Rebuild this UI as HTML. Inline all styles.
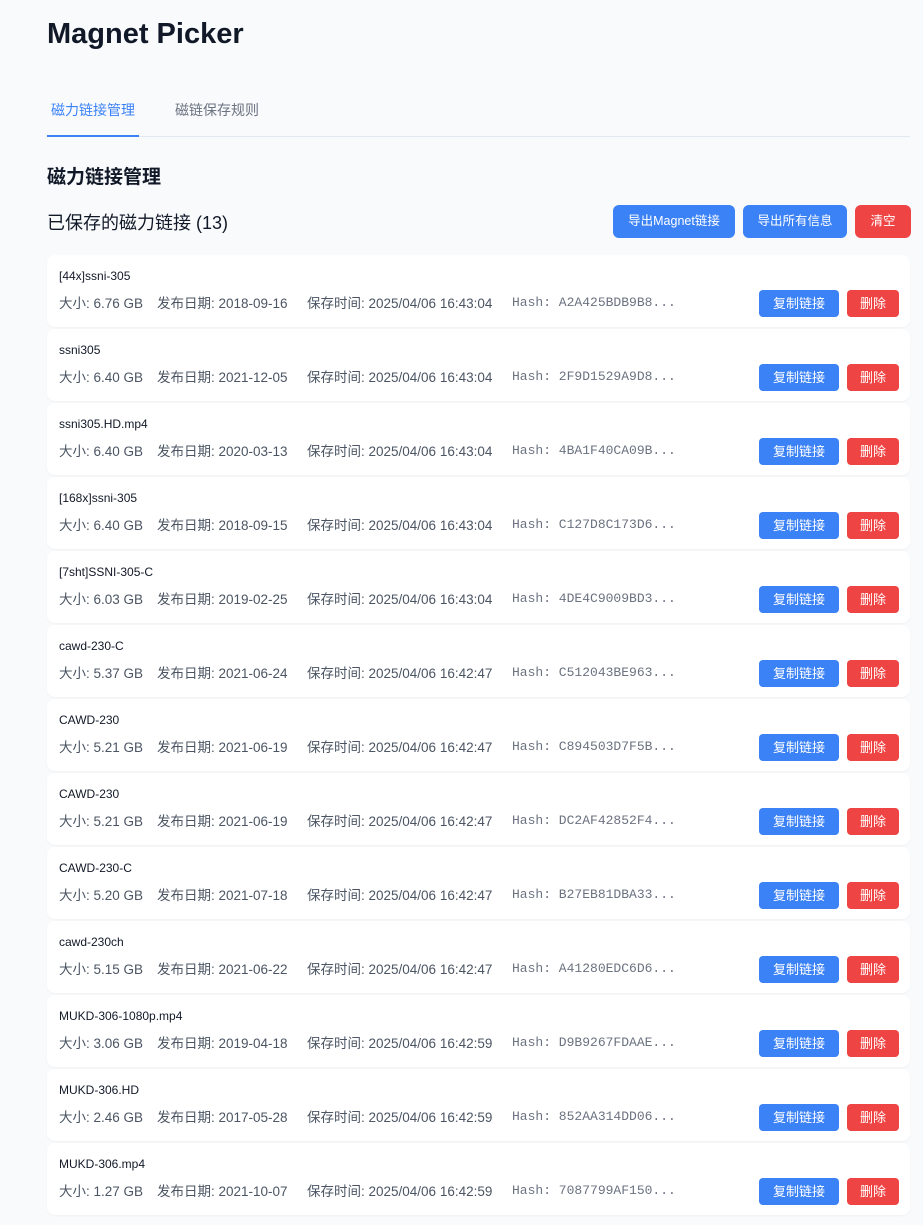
<!DOCTYPE html>
<html><head><meta charset="utf-8"><style>
*{box-sizing:border-box;margin:0;padding:0}
body{background:#f8fafc;font-family:"Liberation Sans","Noto Sans CJK SC",sans-serif;color:#111827;width:923px;height:1225px;overflow:hidden;position:relative}
h1{position:absolute;left:47px;top:18px;font-size:29px;font-weight:700;color:#111827}
.tabs{position:absolute;left:47px;top:90px;width:863px;height:47px;border-bottom:1px solid #e2e8f0}
.tab{position:absolute;top:10px;font-size:14px;color:#6b7280}
.tab.a{left:4px;color:#3b82f6}
.tab.b{left:128px}
.ul{position:absolute;left:0;bottom:-1px;width:92px;height:2px;background:#3b82f6}
h2{position:absolute;left:47px;top:162px;font-size:19px;font-weight:700}
h3{position:absolute;left:47px;top:209px;font-size:18px;font-weight:400}
.btn{position:absolute;color:#fff;font-size:12.5px;border-radius:6px;text-align:center}
.top{top:205px;height:33px;line-height:33px}
.blue{background:#3b82f6}.red{background:#ef4444}
.card{position:absolute;left:47px;width:863px;height:72px;background:#fff;border-radius:8px;box-shadow:0 1px 2px rgba(0,0,0,.04)}
.t{position:absolute;left:12px;top:14px;font-size:12px;color:#111827}
.m{position:absolute;top:37px;font-size:13.5px;color:#4b5563;white-space:nowrap}
.h{font-family:"Liberation Mono",monospace;font-size:13px;color:#6b7280}
.cb{top:35px;height:27px;line-height:27px;font-size:13px;border-radius:4px}
</style></head><body>
<h1>Magnet Picker</h1>
<div class="tabs"><div class="tab a">磁力链接管理</div><div class="tab b">磁链保存规则</div><div class="ul"></div></div>
<h2>磁力链接管理</h2>
<h3>已保存的磁力链接 (13)</h3>
<div class="btn top blue" style="left:613px;width:122px">导出Magnet链接</div>
<div class="btn top blue" style="left:743px;width:104px">导出所有信息</div>
<div class="btn top red" style="left:855px;width:56px">清空</div>
<div id="list"></div>
<script>
var d=[["[44x]ssni-305","6.76","2018-09-16","16:43:04","A2A425BDB9B8"],["ssni305","6.40","2021-12-05","16:43:04","2F9D1529A9D8"],["ssni305.HD.mp4","6.40","2020-03-13","16:43:04","4BA1F40CA09B"],["[168x]ssni-305","6.40","2018-09-15","16:43:04","C127D8C173D6"],["[7sht]SSNI-305-C","6.03","2019-02-25","16:43:04","4DE4C9009BD3"],["cawd-230-C","5.37","2021-06-24","16:42:47","C512043BE963"],["CAWD-230","5.21","2021-06-19","16:42:47","C894503D7F5B"],["CAWD-230","5.21","2021-06-19","16:42:47","DC2AF42852F4"],["CAWD-230-C","5.20","2021-07-18","16:42:47","B27EB81DBA33"],["cawd-230ch","5.15","2021-06-22","16:42:47","A41280EDC6D6"],["MUKD-306-1080p.mp4","3.06","2019-04-18","16:42:59","D9B9267FDAAE"],["MUKD-306.HD","2.46","2017-05-28","16:42:59","852AA314DD06"],["MUKD-306.mp4","1.27","2021-10-07","16:42:59","7087799AF150"]];
var h="";d.forEach(function(r,i){var y=255+i*74;h+='<div class="card" style="top:'+y+'px"><div class="t">'+r[0]+'</div><div class="m" style="left:12px">大小: '+r[1]+' GB</div><div class="m" style="left:110px">发布日期: '+r[2]+'</div><div class="m" style="left:260px">保存时间: 2025/04/06 '+r[3]+'</div><div class="m h" style="left:465px;top:40px">Hash: '+r[4]+'...</div><div class="btn cb blue" style="left:712px;width:80px">复制链接</div><div class="btn cb red" style="left:800px;width:52px">删除</div></div>'});
document.getElementById("list").innerHTML=h;
</script>
</body></html>
